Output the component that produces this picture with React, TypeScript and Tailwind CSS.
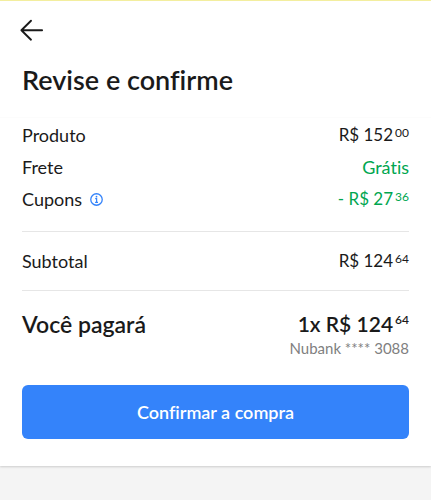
import { ReactNode } from "react";

type PriceProps = {
  value: string;
  cents: string;
  strong?: boolean;
};

function Price({ value, cents, strong }: PriceProps) {
  return (
    <span className={strong ? "flex items-start text-[21px] leading-8" : "flex items-start text-[17px] leading-6"}>
      {value}
      <span className={strong ? "ml-0.5 text-xs leading-6" : "ml-0.5 text-xs leading-5"}>
        {cents}
      </span>
    </span>
  );
}

function Row({ label, children }: { label: ReactNode; children: ReactNode }) {
  return (
    <div className="flex h-8 items-center justify-between">
      <dt className="flex items-center gap-2">{label}</dt>
      <dd>{children}</dd>
    </div>
  );
}

function BackIcon() {
  return (
    <svg
      className="h-6 w-6"
      viewBox="0 0 24 24"
      fill="none"
      stroke="currentColor"
      strokeWidth="1.9"
      strokeLinecap="round"
      strokeLinejoin="round"
    >
      <path d="M22.1 12.2H1.4M11 2.7L1.4 12.2l9.6 9.5" />
    </svg>
  );
}

function InfoIcon() {
  return (
    <svg className="h-[13px] w-[13px]" viewBox="0 0 12 12" fill="none" stroke="currentColor">
      <circle cx="6" cy="6" r="5.3" strokeWidth="1.2" />
      <path d="M4.8 5.2H6.1V8.6M4.7 8.7H7.4" strokeWidth="1.1" />
      <circle cx="6" cy="3.4" r="0.8" fill="currentColor" stroke="none" />
    </svg>
  );
}

export default function App() {
  return (
    <div className="min-h-screen bg-[#f4f4f4] font-['Lato',sans-serif] text-[#1a1a1a] [font-variant-ligatures:none]">
      <main className="border-t border-[#f3ee9e] bg-white pb-[27px] shadow-[0_1px_2px_rgba(0,0,0,0.16)]">
        <header className="px-5 pt-[17px] pb-[21px]">
          <button type="button" aria-label="Voltar" className="block">
            <BackIcon />
          </button>
          <h1 className="mt-[22px] pl-0.5 text-[27px] leading-8 font-semibold">
            Revise e confirme
          </h1>
        </header>

        <div className="border-t border-[#fcfcfc] px-[22px] pt-px text-lg leading-6">
          <dl>
            <div className="border-b border-[#e6e6e6] pb-4">
              <Row label="Produto">
                <Price value="R$ 152" cents="00" />
              </Row>
              <Row label="Frete">
                <span className="text-[#00a650]">Grátis</span>
              </Row>
              <Row
                label={
                  <>
                    Cupons
                    <button type="button" aria-label="Sobre os cupons" className="text-[#3483fa]">
                      <InfoIcon />
                    </button>
                  </>
                }
              >
                <span className="text-[#00a650]">
                  <Price value="- R$ 27" cents="36" />
                </span>
              </Row>
            </div>
            <div className="border-b border-[#e6e6e6] py-[13px]">
              <Row label="Subtotal">
                <Price value="R$ 124" cents="64" />
              </Row>
            </div>
            <div className="pt-[17px] text-[23px] leading-8 font-semibold">
              <Row label="Você pagará">
                <Price value="1x R$ 124" cents="64" strong />
              </Row>
            </div>
          </dl>
          <p className="text-right text-[15px] leading-4 text-[#808080]">Nubank **** 3088</p>

          <button
            type="button"
            className="mt-[29px] h-[54px] w-full rounded-md bg-[#3483fa] text-lg font-semibold text-white"
          >
            Confirmar a compra
          </button>
        </div>
      </main>
    </div>
  );
}
